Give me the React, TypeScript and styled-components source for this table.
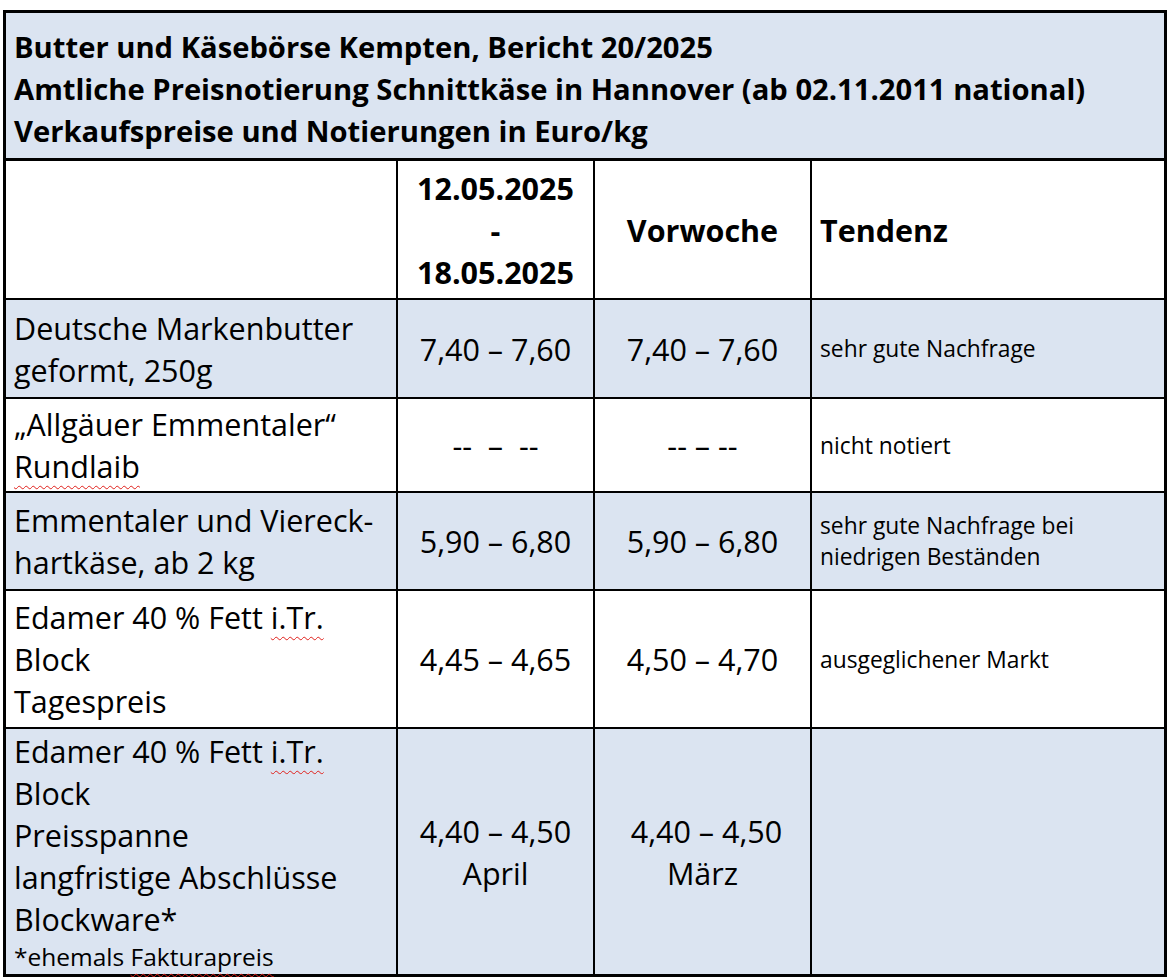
import React from "react"
import styled, { createGlobalStyle } from "styled-components"

const GlobalStyle = createGlobalStyle`
  html, body {
    margin: 0;
    padding: 0;
    background: #ffffff;
  }
  body {
    font-family: "Open Sans", "Noto Sans", "Liberation Sans", sans-serif;
    color: #000000;
  }
`

const shade = "#dbe4f1"

const Page = styled.div`
  padding: 10px 4px 0 3px;
`

const Frame = styled.div`
  width: 1164px;
  box-sizing: border-box;
  border: 3px solid #000;
  background: #fff;
`

const TitleBox = styled.div`
  background: ${shade};
  border-bottom: 3px solid #000;
  padding: 13px 8px 6px 8px;
  font-size: 29.2px;
  font-weight: 700;
  line-height: 42px;
`

const TitleLine = styled.div`
  white-space: nowrap;
`

const Grid = styled.div`
  display: grid;
  grid-template-columns: 392px 197px 217px 1fr;
  grid-template-rows: 139px 99px 94px 98px 138px 245px;
`

type CellProps = {
  $align?: "left" | "center"
  $shaded?: boolean
  $lastCol?: boolean
  $lastRow?: boolean
  $bold?: boolean
  $small?: boolean
}

const Cell = styled.div<CellProps>`
  box-sizing: border-box;
  display: flex;
  flex-direction: column;
  justify-content: center;
  align-items: ${({ $align }) => ($align === "center" ? "center" : "flex-start")};
  text-align: ${({ $align }) => $align || "left"};
  padding: 0 8px;
  background: ${({ $shaded }) => ($shaded ? shade : "#fff")};
  border-right: ${({ $lastCol }) => ($lastCol ? "none" : "2px solid #000")};
  border-bottom: ${({ $lastRow }) => ($lastRow ? "none" : "2px solid #000")};
  font-size: ${({ $small }) => ($small ? "22.8px" : "30.5px")};
  line-height: ${({ $small }) => ($small ? "31px" : "42px")};
  font-weight: ${({ $bold }) => ($bold ? 700 : 400)};
  white-space: nowrap;
`

const Note = styled.span`
  font-size: 24.5px;
  line-height: 34px;
`

const Squiggle = styled.span`
  text-decoration: underline wavy #e0201b;
  text-decoration-thickness: 1px;
  text-underline-offset: 7px;
`

type Row = {
  label: React.ReactNode
  current: React.ReactNode
  previous: React.ReactNode
  trend: React.ReactNode
}

const rows: Row[] = [
  {
    label: (
      <>
        <div>Deutsche Markenbutter</div>
        <div>geformt, 250g</div>
      </>
    ),
    current: "7,40 – 7,60",
    previous: "7,40 – 7,60",
    trend: "sehr gute Nachfrage",
  },
  {
    label: (
      <>
        <div>„Allgäuer Emmentaler“</div>
        <div>
          <Squiggle>Rundlaib</Squiggle>
        </div>
      </>
    ),
    current: "--\u00a0 –\u00a0 --",
    previous: "-- – --",
    trend: "nicht notiert",
  },
  {
    label: (
      <>
        <div>Emmentaler und Viereck-</div>
        <div>hartkäse, ab 2 kg</div>
      </>
    ),
    current: "5,90 – 6,80",
    previous: "5,90 – 6,80",
    trend: (
      <>
        <div>sehr gute Nachfrage bei</div>
        <div>niedrigen Beständen</div>
      </>
    ),
  },
  {
    label: (
      <>
        <div>
          Edamer 40 % Fett <Squiggle>i.Tr.</Squiggle>
        </div>
        <div>Block</div>
        <div>Tagespreis</div>
      </>
    ),
    current: "4,45 – 4,65",
    previous: "4,50 – 4,70",
    trend: "ausgeglichener Markt",
  },
  {
    label: (
      <>
        <div>
          Edamer 40 % Fett <Squiggle>i.Tr.</Squiggle>
        </div>
        <div>Block</div>
        <div>Preisspanne</div>
        <div>langfristige Abschlüsse</div>
        <div>Blockware*</div>
        <Note>
          *ehemals <Squiggle>Fakturapreis</Squiggle>
        </Note>
      </>
    ),
    current: (
      <>
        <div>4,40 – 4,50</div>
        <div>April</div>
      </>
    ),
    previous: (
      <>
        <div>{"\u00a0"}4,40 – 4,50</div>
        <div>März</div>
      </>
    ),
    trend: "",
  },
]

export default function App() {
  return (
    <Page>
      <GlobalStyle />
      <Frame>
        <TitleBox>
          <TitleLine>Butter und Käsebörse Kempten, Bericht 20/2025</TitleLine>
          <TitleLine>Amtliche Preisnotierung Schnittkäse in Hannover (ab 02.11.2011 national)</TitleLine>
          <TitleLine>Verkaufspreise und Notierungen in Euro/kg</TitleLine>
        </TitleBox>
        <Grid>
          <Cell />
          <Cell $align="center" $bold>
            <div>12.05.2025</div>
            <div>-</div>
            <div>18.05.2025</div>
          </Cell>
          <Cell $align="center" $bold>
            Vorwoche
          </Cell>
          <Cell $bold $lastCol>
            Tendenz
          </Cell>
          {rows.map((row, i) => {
            const shaded = i % 2 === 0
            const last = i === rows.length - 1
            return (
              <React.Fragment key={i}>
                <Cell $shaded={shaded} $lastRow={last}>
                  {row.label}
                </Cell>
                <Cell $align="center" $shaded={shaded} $lastRow={last}>
                  {row.current}
                </Cell>
                <Cell $align="center" $shaded={shaded} $lastRow={last}>
                  {row.previous}
                </Cell>
                <Cell $small $shaded={shaded} $lastRow={last} $lastCol>
                  {row.trend}
                </Cell>
              </React.Fragment>
            )
          })}
        </Grid>
      </Frame>
    </Page>
  )
}
